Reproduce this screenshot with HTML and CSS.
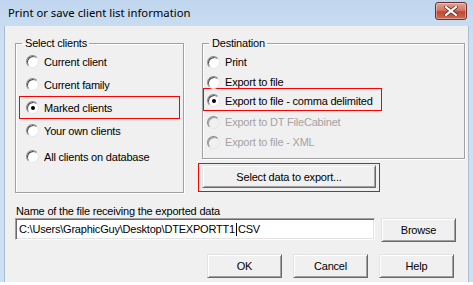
FILE: index.html
```html
<!DOCTYPE html>
<html lang="en">
<head>
    <meta charset="UTF-8">
    <title>Print or save client list information</title>
    <link rel="stylesheet" href="styles.css">
</head>
<body>
    <div class="window">
        <div class="title-bar">
            <span class="title-text">Print or save client list information</span>
            <button class="close-btn" aria-label="Close">
                <svg width="14" height="10" viewBox="0 0 14 10">
                    <path d="M2 1 L12 9 M12 1 L2 9" stroke="#5a2a2a" stroke-width="3.6" stroke-linecap="square"/>
                    <path d="M2 1 L12 9 M12 1 L2 9" stroke="#ffffff" stroke-width="2.2" stroke-linecap="square"/>
                </svg>
            </button>
        </div>

        <div class="client">
            <div class="top-area">
                <fieldset class="group group-clients">
                    <legend>Select clients</legend>
                    <label class="radio-row"><span class="radio"></span>Current client</label>
                    <label class="radio-row"><span class="radio"></span>Current family</label>
                    <label class="radio-row marked"><span class="radio checked"></span>Marked clients</label>
                    <label class="radio-row"><span class="radio"></span>Your own clients</label>
                    <label class="radio-row last"><span class="radio"></span>All clients on database</label>
                </fieldset>

                <div class="dest-column">
                    <fieldset class="group group-dest">
                        <legend>Destination</legend>
                        <label class="radio-row"><span class="radio"></span>Print</label>
                        <label class="radio-row"><span class="radio"></span>Export to file</label>
                        <label class="radio-row marked"><span class="radio checked"></span>Export to file - comma delimited</label>
                        <label class="radio-row disabled"><span class="radio"></span>Export to DT FileCabinet</label>
                        <label class="radio-row disabled"><span class="radio"></span>Export to file - XML</label>
                    </fieldset>
                    <div class="select-wrap">
                        <button class="win-btn select-btn">Select data to export...</button>
                    </div>
                </div>
            </div>

            <div class="file-label">Name of the file receiving the exported data</div>
            <div class="file-row">
                <div class="text-field">C:\Users\GraphicGuy\Desktop\DTEXPORTT1<span class="caret"></span>CSV</div>
                <button class="win-btn">Browse</button>
            </div>

            <div class="button-row">
                <button class="win-btn">OK</button>
                <button class="win-btn">Cancel</button>
                <button class="win-btn">Help</button>
            </div>
        </div>
    </div>
</body>
</html>
```

FILE: styles.css
```css
/* Dialog shell */
body {
    margin: 0;
    background: #ffffff;
    font-family: 'Liberation Sans', Arial, sans-serif;
    font-size: 11px;
    letter-spacing: -0.2px;
    color: #000;
}

.window {
    width: 473px;
    height: 282px;
    display: flex;
    flex-direction: column;
    background: linear-gradient(to bottom, #c0d6ee, #cde0f3 40px);
    padding: 0 4px;
    box-sizing: border-box;
}

.title-bar {
    height: 26px;
    display: flex;
    align-items: center;
    justify-content: space-between;
    flex-shrink: 0;
}

.title-text {
    font-family: 'Noto Sans', 'Liberation Sans', sans-serif;
    font-size: 11.3px;
    letter-spacing: 0;
    color: #000;
    margin-left: 4px;
    margin-top: -1px;
}

.close-btn {
    width: 32px;
    height: 18px;
    margin-top: -5px;
    margin-right: 2px;
    padding: 0;
    border: 1px solid #6b2f2f;
    border-radius: 3px;
    background: linear-gradient(to bottom, #e2a394 0%, #d47764 45%, #c24634 55%, #cf6a4e 100%);
    box-shadow: inset 0 0 0 1px rgba(255, 255, 255, 0.35);
    display: flex;
    align-items: center;
    justify-content: center;
}

/* Client area */
.client {
    flex: 1;
    background: #f0f0f0;
    border-left: 1px solid #a7bdd3;
    border-right: 1px solid #a7bdd3;
    padding: 10px 3px 0 10px;
}

.top-area {
    display: grid;
    grid-template-columns: 169px 263px;
    column-gap: 18px;
    align-items: start;
}

.group {
    margin: 0;
    padding: 0;
    border: 1px solid #a0a0a0;
    box-shadow: 1px 1px 0 #ffffff, inset 1px 1px 0 #ffffff;
    min-width: 0;
}

.group legend {
    margin-left: 6px;
    padding: 0 2px 0 3px;
    line-height: 14px;
}

.group-clients {
    height: 157px;
    box-sizing: border-box;
}

.group-dest {
    height: 123px;
    box-sizing: border-box;
    padding-top: 2px;
}

.radio-row {
    display: flex;
    align-items: center;
    height: 23px;
    box-sizing: border-box;
    padding-left: 10px;
}

.group-dest .radio-row {
    height: 20px;
    padding-left: 4px;
}

.radio-row.last {
    margin-top: 3px;
}

.radio {
    width: 11px;
    height: 11px;
    border-radius: 50%;
    border: 1px solid;
    border-color: #8a8a8a #e6e6e6 #e6e6e6 #8a8a8a;
    background: #ffffff;
    box-shadow: inset 1px 1px 0 #505050;
    margin-right: 5px;
    flex-shrink: 0;
    display: flex;
    align-items: center;
    justify-content: center;
}

.radio.checked::before {
    content: '';
    width: 4px;
    height: 4px;
    border-radius: 50%;
    background: #000;
}

.disabled {
    color: #a3a3a3;
}

.disabled .radio {
    background: #f0f0f0;
    box-shadow: inset 1px 1px 0 #a0a0a0;
}

/* red annotation boxes */
.group-clients .marked {
    border: 1px solid #ff0000;
    margin: 0 3px;
    padding-left: 6px;
}

.group-dest .marked {
    border: 1px solid #ff0000;
    height: 23px;
    margin: -4px 82px 1px 0;
    padding: 2px 0 0 3px;
}

.select-wrap {
    margin-top: 4px;
    margin-left: -4px;
    width: 182px;
    height: 29px;
    border: 1px solid #ff0000;
    box-sizing: border-box;
    padding: 1px 0 0 3px;
}

/* Classic push buttons */
.win-btn {
    width: 75px;
    height: 24px;
    padding: 0;
    font-family: 'Liberation Sans', Arial, sans-serif;
    font-size: 11px;
    letter-spacing: -0.2px;
    color: #000;
    background: #f0f0f0;
    border: 1px solid;
    border-color: #e3e3e3 #696969 #696969 #e3e3e3;
    box-shadow: inset 1px 1px 0 #ffffff, inset -1px -1px 0 #a0a0a0;
}

.select-btn {
    width: 174px;
    height: 23px;
}

.file-label {
    margin-top: 12px;
    margin-left: 1px;
    line-height: 13px;
}

.file-row {
    display: flex;
    align-items: flex-start;
    gap: 6px;
}

.text-field {
    width: 360px;
    height: 22px;
    box-sizing: border-box;
    background: #ffffff;
    border: 1px solid;
    border-color: #a0a0a0 #ffffff #ffffff #a0a0a0;
    box-shadow: inset 1px 1px 0 #696969, inset -1px -1px 0 #e3e3e3;
    padding: 0 3px;
    display: flex;
    align-items: center;
    white-space: nowrap;
}

.caret {
    display: inline-block;
    width: 1px;
    height: 13px;
    background: #000;
    margin: 0 1px;
}

.button-row {
    display: flex;
    justify-content: flex-end;
    gap: 11px;
    margin-top: 12px;
    padding-right: 11px;
}
```
